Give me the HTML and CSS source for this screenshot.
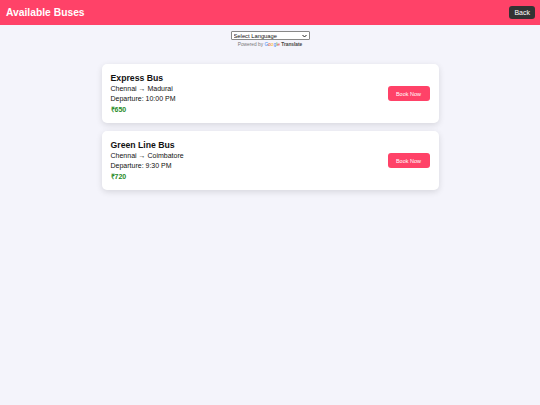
FILE: index.html
```html
<!DOCTYPE html>
<html lang="en">

<head>
  <meta charset="UTF-8">
  <title>Available Buses</title>
  <link rel="stylesheet" href="styles.css">
</head>

<body>

  <header class="header">
    <h1 class="header__title">Available Buses</h1>
    <button class="header__back">Back</button>
  </header>

  <div class="translate">
    <div class="translate__box">
      <select class="translate__select">
        <option>Select Language</option>
      </select>
      <svg class="translate__arrow" width="5" height="4" viewBox="0 0 5 4">
        <path d="M0.5 1 L2.5 3 L4.5 1" fill="none" stroke="#222" stroke-width="1"/>
      </svg>
    </div>
    <p class="translate__powered">Powered by
      <span class="translate__google"><span class="g-blue">G</span><span class="g-red">o</span><span class="g-yellow">o</span><span class="g-blue">g</span><span class="g-green">l</span><span class="g-red">e</span></span>
      <b class="translate__word">Translate</b>
    </p>
  </div>

  <main class="buses">
    <div class="bus">
      <div class="bus__info">
        <h3 class="bus__name">Express Bus</h3>
        <p class="bus__line">Chennai → Madurai</p>
        <p class="bus__line">Departure: 10:00 PM</p>
        <p class="bus__price">₹650</p>
      </div>
      <button class="bus__btn">Book Now</button>
    </div>
    <div class="bus">
      <div class="bus__info">
        <h3 class="bus__name">Green Line Bus</h3>
        <p class="bus__line">Chennai → Coimbatore</p>
        <p class="bus__line">Departure: 9:30 PM</p>
        <p class="bus__price">₹720</p>
      </div>
      <button class="bus__btn">Book Now</button>
    </div>
  </main>

</body>

</html>
```

FILE: styles.css
```css
html,
body {
  font-family: "Liberation Sans", Arial, sans-serif;
  -webkit-font-smoothing: antialiased;
}

body {
  margin: 0;
  min-height: 405px;
  background-color: #f4f4fb;
}

button {
  border: none;
  font-family: inherit;
  cursor: pointer;
}

.header {
  height: 25px;
  padding: 0 5px 0 6px;
  display: flex;
  align-items: center;
  justify-content: space-between;
  background-color: #ff4268;
}

.header__title {
  margin: 0;
  font-size: 10.3px;
  font-weight: bold;
  color: #fff;
}

.header__back {
  height: 13px;
  padding: 0 5px;
  font-size: 7px;
  color: #fff;
  background-color: #333;
  border-radius: 3px;
}

.translate {
  margin-top: 6px;
  display: flex;
  flex-direction: column;
  align-items: center;
}

.translate__box {
  position: relative;
  display: flex;
}

.translate__select {
  width: 79px;
  height: 9px;
  padding: 0 0 0 2px;
  font-size: 5.8px;
  font-family: inherit;
  color: #111;
  border: 1px solid #888;
  border-radius: 1px;
  background: #fff;
  appearance: none;
  -webkit-appearance: none;
}

.translate__arrow {
  position: absolute;
  right: 3px;
  top: 2.5px;
}

.translate__powered {
  margin: 2px 0 0;
  font-size: 4.8px;
  color: #777;
}

.translate__word {
  color: #444;
}

.g-blue {
  color: #4285f4;
}

.g-red {
  color: #ea4335;
}

.g-yellow {
  color: #fbbc05;
}

.g-green {
  color: #34a853;
}

.buses {
  margin-top: 17px;
  display: flex;
  flex-direction: column;
  align-items: center;
  gap: 8px;
}

.bus {
  width: 337px;
  height: 59px;
  box-sizing: border-box;
  padding: 0 9px 0 9px;
  display: flex;
  align-items: center;
  justify-content: space-between;
  background-color: #fff;
  border-radius: 5px;
  box-shadow: 0 2px 6px rgba(0, 0, 0, 0.12);
}

.bus__name {
  margin: 0 0 1px;
  font-size: 8.7px;
  font-weight: bold;
  color: #111;
}

.bus__line {
  margin: 0;
  font-size: 7px;
  line-height: 9.8px;
  color: #111;
}

.bus__price {
  margin: 1px 0 0;
  font-size: 7px;
  font-weight: bold;
  color: #1f8a1f;
}

.bus__btn {
  width: 42px;
  height: 15px;
  padding: 0;
  font-size: 5.5px;
  color: #fff;
  background-color: #ff4268;
  border-radius: 3px;
}
```
